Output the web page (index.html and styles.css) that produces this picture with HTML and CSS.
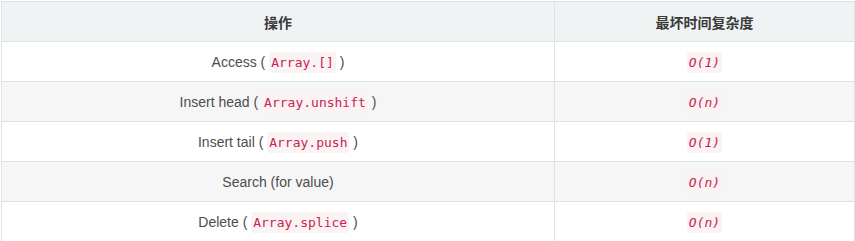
FILE: index.html
```html
<!DOCTYPE html>
<html lang="zh">
<head>
<meta charset="utf-8">
<link rel="stylesheet" href="styles.css">
</head>
<body>
<div class="wrap">
<table class="tbl">
<colgroup><col class="c1"><col class="c2"></colgroup>
<thead>
<tr><th>操作</th><th>最坏时间复杂度</th></tr>
</thead>
<tbody>
<tr><td>Access ( <code>Array.[]</code> )</td><td><code class="it">O(1)</code></td></tr>
<tr><td>Insert head ( <code>Array.unshift</code> )</td><td><code class="it">O(n)</code></td></tr>
<tr><td>Insert tail ( <code>Array.push</code> )</td><td><code class="it">O(1)</code></td></tr>
<tr><td>Search (for value)</td><td><code class="it">O(n)</code></td></tr>
<tr><td>Delete ( <code>Array.splice</code> )</td><td><code class="it">O(n)</code></td></tr>
</tbody>
</table>
</div>
</body>
</html>
```

FILE: styles.css
```css
html, body {
  margin: 0;
  padding: 0;
  background: #fff;
}
.wrap {
  padding: 1px 1px 0 1px;
}
.tbl {
  width: 853px;
  table-layout: fixed;
  border-collapse: collapse;
  font-family: "Liberation Sans", Arial, "Noto Sans CJK SC", sans-serif;
  font-size: 14px;
  color: #4d4d4d;
}
.c1 { width: 553px; }
.c2 { width: 300px; }
.tbl th, .tbl td {
  border: 1px solid #dfe2e5;
  text-align: center;
  height: 39px;
  padding: 0 10px;
}
.tbl th {
  background: #f0f3f4;
  font-weight: bold;
  color: #3a3a3a;
  font-family: "Noto Sans CJK SC", sans-serif;
  font-size: 14px;
}
.tbl tbody tr:nth-child(even) td {
  background: #f6f6f6;
}
code {
  font-family: "DejaVu Sans Mono", "Liberation Mono", monospace;
  font-size: 13px;
  color: #c7254e;
  background: #fbf2f4;
  padding: 3px 2px;
  border-radius: 3px;
}
.it {
  font-style: italic;
}
```
